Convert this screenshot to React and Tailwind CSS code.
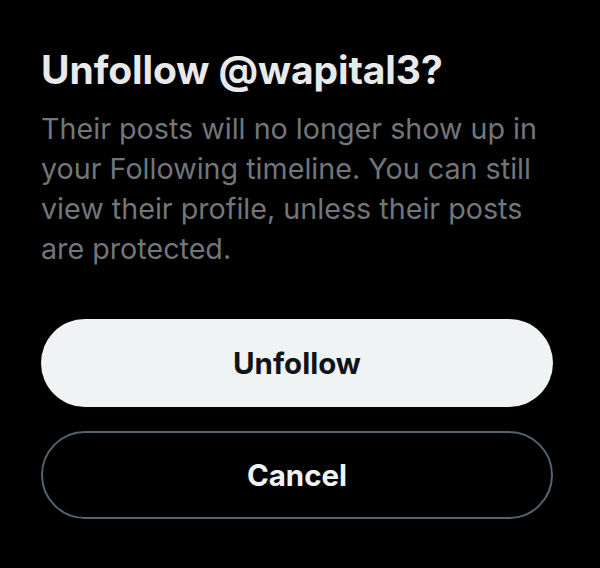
import React from 'react';

export default function App() {
  return (
    <div className="min-h-screen w-[600px] h-[568px] bg-black font-['Inter',sans-serif] pl-[41px] pr-[47px] pt-[46px]">
      <h1 className="text-[#e7e9ea] text-[39px] font-bold leading-[48px] tracking-[-0.1px]">Unfollow @wapital3?</h1>
      <p className="mt-[15px] max-w-[505px] text-[#71767b] text-[28.7px] leading-[40px]">
        Their posts will no longer show up in your Following timeline. You can still view their profile, unless their posts are protected.
      </p>
      <div className="mt-[50px] flex flex-col gap-[24px]">
        <button className="h-[88px] w-full rounded-full bg-[#eff3f4] text-[#0f1419] text-[29.5px] font-bold">
          Unfollow
        </button>
        <button className="h-[88px] w-full rounded-full border-2 border-[#536471] text-[#eff3f4] text-[29.5px] font-bold">
          Cancel
        </button>
      </div>
    </div>
  );
}
